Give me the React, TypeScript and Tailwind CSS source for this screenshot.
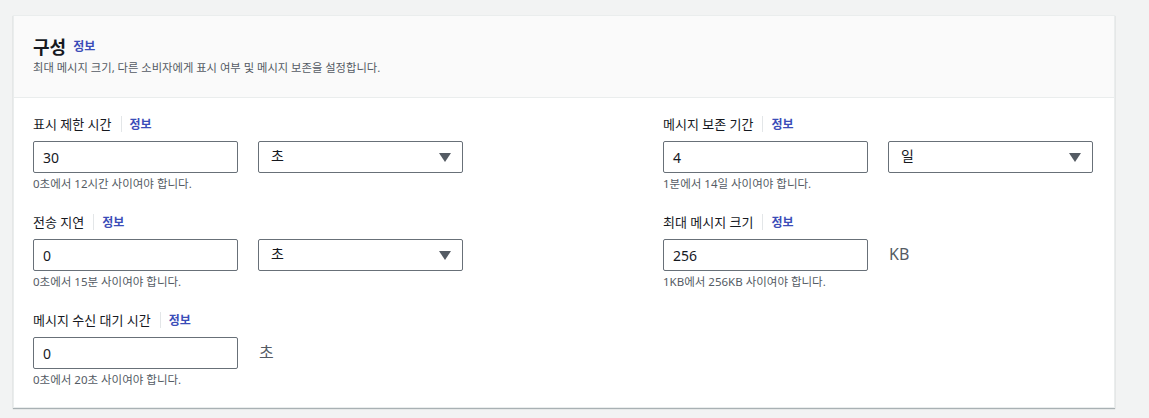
import type { FC } from "react";

const font = { fontFamily: '"Noto Sans", "Noto Sans CJK KR", sans-serif' };

const Info: FC<{ className?: string }> = ({ className = "" }) => (
    <span className={`text-[12px] font-bold text-[#3b4db8] leading-5 ${className}`}>정보</span>
);

const Label: FC<{ text: string }> = ({ text }) => (
    <div className="flex items-center h-5">
        <span className="text-[13px] leading-5 text-[#16191f]">{text}</span>
        <span className="ml-[9px] mr-[8px] h-4 w-px bg-[#e3e6e8]" />
        <Info className="translate-y-[1px]" />
    </div>
);

const Input: FC<{ value: string }> = ({ value }) => (
    <div className="w-[205px] h-[32px] border border-[#687078] rounded-[2px] bg-white flex items-center px-[9px] text-[14px] text-[#16191f]">
        {value}
    </div>
);

const Select: FC<{ value: string }> = ({ value }) => (
    <div className="w-[205px] h-[32px] border border-[#687078] rounded-[2px] bg-white flex items-center justify-between pl-[12px] pr-[11px] text-[14px] text-[#16191f]">
        <span className="-mt-[3px]">{value}</span>
        <svg width="12" height="9" viewBox="0 0 12 9">
            <path d="M0 0 H12 L6 9 Z" fill="#545b64" />
        </svg>
    </div>
);

type Field = {
    label: string;
    value: string;
    unit?: string;
    select?: string;
    hint: string;
};

const FieldBlock: FC<{ f: Field }> = ({ f }) => (
    <div className="flex flex-col">
        <Label text={f.label} />
        <div className="flex items-center gap-[20px] mt-[7px]">
            <Input value={f.value} />
            {f.select && <Select value={f.select} />}
            {f.unit && <span className="text-[16px] text-[#545b64] -mt-[3px] ml-[1px]">{f.unit}</span>}
        </div>
        <div className="text-[11.5px] leading-4 text-[#545b64] mt-[3px]">{f.hint}</div>
    </div>
);

const left: Field[] = [
    { label: "표시 제한 시간", value: "30", select: "초", hint: "0초에서 12시간 사이여야 합니다." },
    { label: "전송 지연", value: "0", select: "초", hint: "0초에서 15분 사이여야 합니다." },
    { label: "메시지 수신 대기 시간", value: "0", unit: "초", hint: "0초에서 20초 사이여야 합니다." },
];

const right: Field[] = [
    { label: "메시지 보존 기간", value: "4", select: "일", hint: "1분에서 14일 사이여야 합니다." },
    { label: "최대 메시지 크기", value: "256", unit: "KB", hint: "1KB에서 256KB 사이여야 합니다." },
];

export default function App() {
    return (
        <div className="w-[1149px] h-[418px] bg-[#f2f3f3] pt-[15px] pl-[13px]" style={font}>
            <div className="w-[1102px] bg-white border border-[#eaeded] shadow-[0_1px_1px_0_rgba(0,28,36,0.3)]">
                {/* cabecera */}
                <div className="bg-[#fafafa] border-b border-[#eaeded] px-[19px] pt-[20px] pb-[21px]">
                    <div className="flex items-center gap-[7px] h-[22px]">
                        <span className="text-[18px] font-bold text-[#16191f]">구성</span>
                        <Info />
                    </div>
                    <div className="text-[11.3px] text-[#545b64] mt-[2px] leading-4">
                        최대 메시지 크기, 다른 소비자에게 표시 여부 및 메시지 보존을 설정합니다.
                    </div>
                </div>

                {/* formulario */}
                <div className="grid grid-cols-[630px_1fr] px-[19px] pt-[16px] pb-[19px]">
                    <div className="flex flex-col gap-[20px]">
                        {left.map((f) => <FieldBlock key={f.label} f={f} />)}
                    </div>
                    <div className="flex flex-col gap-[20px]">
                        {right.map((f) => <FieldBlock key={f.label} f={f} />)}
                    </div>
                </div>
            </div>
        </div>
    );
}
